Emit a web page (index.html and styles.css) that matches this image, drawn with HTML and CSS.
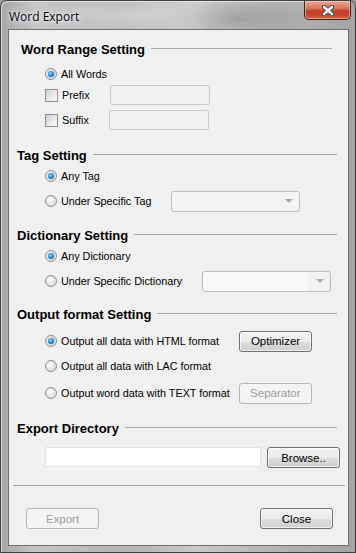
FILE: index.html
```html
<!DOCTYPE html>
<html lang="en">
<head>
  <meta charset="UTF-8" />
  <title>Word Export</title>
  <link rel="stylesheet" href="styles.css">
</head>
<body>
  <div class="window">
    <div class="titlebar">
      <span class="title">Word Export</span>
      <button class="close-btn" aria-label="Close">
        <svg width="14" height="11" viewBox="0 0 14 11">
          <path d="M3 2 L11 9 M11 2 L3 9" stroke="#3a3a3a" stroke-width="4.4" stroke-linecap="round"/>
          <path d="M3 2 L11 9 M11 2 L3 9" stroke="#ffffff" stroke-width="2.6" stroke-linecap="round"/>
        </svg>
      </button>
    </div>

    <div class="client">
      <div class="group group-first">
        <div class="group-head"><span>Word Range Setting</span></div>
        <div class="row row-first">
          <span class="radio checked"></span><span class="label">All Words</span>
        </div>
        <div class="row row-tight">
          <span class="check"></span><span class="label">Prefix</span>
          <span class="field field-short"></span>
        </div>
        <div class="row">
          <span class="check"></span><span class="label">Suffix</span>
          <span class="field field-short"></span>
        </div>
      </div>

      <div class="group group-tag">
        <div class="group-head"><span>Tag Setting</span></div>
        <div class="row row-first">
          <span class="radio checked"></span><span class="label">Any Tag</span>
        </div>
        <div class="row">
          <span class="radio"></span><span class="label">Under Specific Tag</span>
          <span class="combo"><span class="combo-arrow"></span></span>
        </div>
      </div>

      <div class="group group-dict">
        <div class="group-head"><span>Dictionary Setting</span></div>
        <div class="row row-first">
          <span class="radio checked"></span><span class="label">Any Dictionary</span>
        </div>
        <div class="row">
          <span class="radio"></span><span class="label">Under Specific Dictionary</span>
          <span class="combo combo-split"><span class="combo-arrow"></span></span>
        </div>
      </div>

      <div class="group group-output">
        <div class="group-head"><span>Output format Setting</span></div>
        <div class="row row-first">
          <span class="radio checked"></span><span class="label">Output all data with HTML format</span>
          <button class="btn btn-inline">Optimizer</button>
        </div>
        <div class="row">
          <span class="radio"></span><span class="label">Output all data with LAC format</span>
        </div>
        <div class="row row-loose">
          <span class="radio"></span><span class="label label-text">Output word data with TEXT format</span>
          <button class="btn btn-inline btn-disabled">Separator</button>
        </div>
      </div>

      <div class="group group-dir">
        <div class="group-head"><span>Export Directory</span></div>
        <div class="dir-row">
          <span class="dir-field"></span>
          <button class="btn">Browse..</button>
        </div>
      </div>

      <div class="separator"></div>

      <div class="footer">
        <button class="btn btn-disabled">Export</button>
        <button class="btn">Close</button>
      </div>
    </div>
  </div>
</body>
</html>
```

FILE: styles.css
```css
* {
  margin: 0;
  padding: 0;
  box-sizing: border-box;
}
body {
  width: 356px;
  height: 553px;
  overflow: hidden;
  background-color: #9a9a9a;
  font-family: 'Liberation Sans', Arial, sans-serif;
  font-size: 10.8px;
  color: #000;
}
.window {
  width: 356px;
  height: 553px;
  border: 1px solid #3f3f3f;
  border-radius: 7px 7px 0 0;
  background:
    radial-gradient(ellipse 90px 24px at 130px 14px, rgba(255,255,255,0.35), rgba(255,255,255,0) 100%),
    radial-gradient(ellipse 70px 20px at 240px 18px, rgba(80,80,80,0.25), rgba(80,80,80,0) 100%),
    linear-gradient(90deg, #a8a8a8 0%, #c6c6c6 10%, #b4b4b4 35%, #c9c9c9 55%, #b2b2b2 80%, #a4a4a4 100%);
  display: flex;
  flex-direction: column;
  box-shadow: inset 1px 1px 0 rgba(255,255,255,0.6);
}
.titlebar {
  height: 28px;
  display: flex;
  justify-content: space-between;
  align-items: flex-start;
  padding-left: 8px;
}
.title {
  margin-top: 7px;
  font-family: 'Open Sans', 'Liberation Sans', sans-serif;
  font-size: 12px;
  color: #000;
  text-shadow: 0 0 6px #fff, 0 0 3px #fff;
}
.close-btn {
  width: 47px;
  height: 19px;
  margin-right: 4px;
  border: 1px solid #4a1d14;
  border-top: none;
  border-radius: 0 0 5px 5px;
  background: linear-gradient(180deg, #e9a99b 0%, #d7765f 40%, #c4402a 55%, #c14a2f 80%, #d36a4d 100%);
  box-shadow: inset 0 0 0 1px rgba(255,220,210,0.5);
  display: flex;
  align-items: center;
  justify-content: center;
  padding-top: 1px;
}
.client {
  flex: 1;
  margin: 0 6px 6px 7px;
  background-color: #f0f0f0;
  border: 1px solid #707070;
  display: flex;
  flex-direction: column;
}
.group {
  padding-left: 8px;
  padding-right: 11px;
}
.group-first {
  padding-left: 12px;
  padding-right: 16px;
  margin-top: 11px;
}
.group-tag {
  margin-top: 17px;
}
.group-dict {
  margin-top: 16px;
}
.group-output {
  margin-top: 15px;
}
.group-dir {
  margin-top: 17px;
  padding-right: 8px;
}
.group-head {
  display: flex;
  align-items: center;
  height: 16px;
  font-weight: bold;
  font-size: 13px;
  white-space: nowrap;
}
.group-head::after {
  content: '';
  flex: 1;
  margin-left: 6px;
  margin-top: -1px;
  border-top: 1px solid #a5a5a5;
}
.group-dir .group-head {
  margin-right: 3px;
}
.row {
  display: flex;
  align-items: center;
  height: 20px;
  margin-top: 5px;
  padding-left: 28px;
  white-space: nowrap;
}
.group-first .row {
  padding-left: 24px;
}
.row-first {
  margin-top: 3px;
}
.group-first .row-first {
  margin-top: 7px;
}
.row-tight {
  margin-top: 1px;
}
.row-loose {
  margin-top: 7px;
}
.group-output .row-first {
  margin-top: 9px;
}
.label {
  margin-left: 4px;
  margin-right: 20px;
}
.label-text {
  margin-right: 9px;
}
.radio {
  flex: none;
  width: 12px;
  height: 12px;
  border-radius: 50%;
  border: 1px solid #8f8f8f;
  background: radial-gradient(circle at 40% 40%, #ffffff 0%, #e6e6e6 50%, #cfcfcf 100%);
  display: flex;
  align-items: center;
  justify-content: center;
}
.radio.checked::after {
  content: '';
  width: 6px;
  height: 6px;
  border-radius: 50%;
  background: radial-gradient(circle at 40% 35%, #8fd3ff 0%, #2a8ad4 50%, #0b4f8a 100%);
  box-shadow: 0 0 1px #1b5c96;
}
.check {
  flex: none;
  width: 13px;
  height: 13px;
  border: 1px solid #8f8f8f;
  background: linear-gradient(135deg, #cfcfcf 0%, #ebebeb 60%, #f7f7f7 100%);
}
.field {
  height: 20px;
  border: 1px solid #c6c6c6;
  border-radius: 2px;
  background-color: #f0f0f0;
}
.field-short {
  width: 100px;
}
.combo {
  flex: none;
  width: 129px;
  height: 21px;
  border: 1px solid #bdbdbd;
  border-radius: 3px;
  background-color: #f4f4f4;
  display: flex;
  justify-content: flex-end;
  align-items: center;
  padding-right: 6px;
}
.combo-split {
  background: linear-gradient(90deg, #f8f8f8 0%, #f8f8f8 83%, #f2f2f2 83%, #f2f2f2 100%);
}
.combo-arrow {
  width: 0;
  height: 0;
  border-left: 4px solid transparent;
  border-right: 4px solid transparent;
  border-top: 4px solid #a8a8a8;
}
.btn {
  flex: none;
  width: 73px;
  height: 21px;
  border: 1px solid #707070;
  border-radius: 3px;
  background: linear-gradient(180deg, #f2f2f2 0%, #ebebeb 50%, #dddddd 51%, #cfcfcf 100%);
  box-shadow: inset 0 0 0 1px rgba(255,255,255,0.7);
  font-family: inherit;
  font-size: 11.5px;
  color: #000;
}
.btn-disabled {
  border-color: #b5b5b5;
  background: #f4f4f4;
  color: #9c9c9c;
  box-shadow: none;
}
.dir-row {
  display: flex;
  gap: 6px;
  margin-top: 11px;
  padding-left: 28px;
}
.dir-field {
  width: 218px;
  height: 20px;
  background-color: #fff;
  border: 1px solid #e2e2e2;
}
.separator {
  margin: 17px 3px 0 4px;
  border-top: 1px solid #a0a0a0;
}
.footer {
  display: flex;
  justify-content: space-between;
  margin-top: 22px;
  padding: 0 15px 0 17px;
}
```
